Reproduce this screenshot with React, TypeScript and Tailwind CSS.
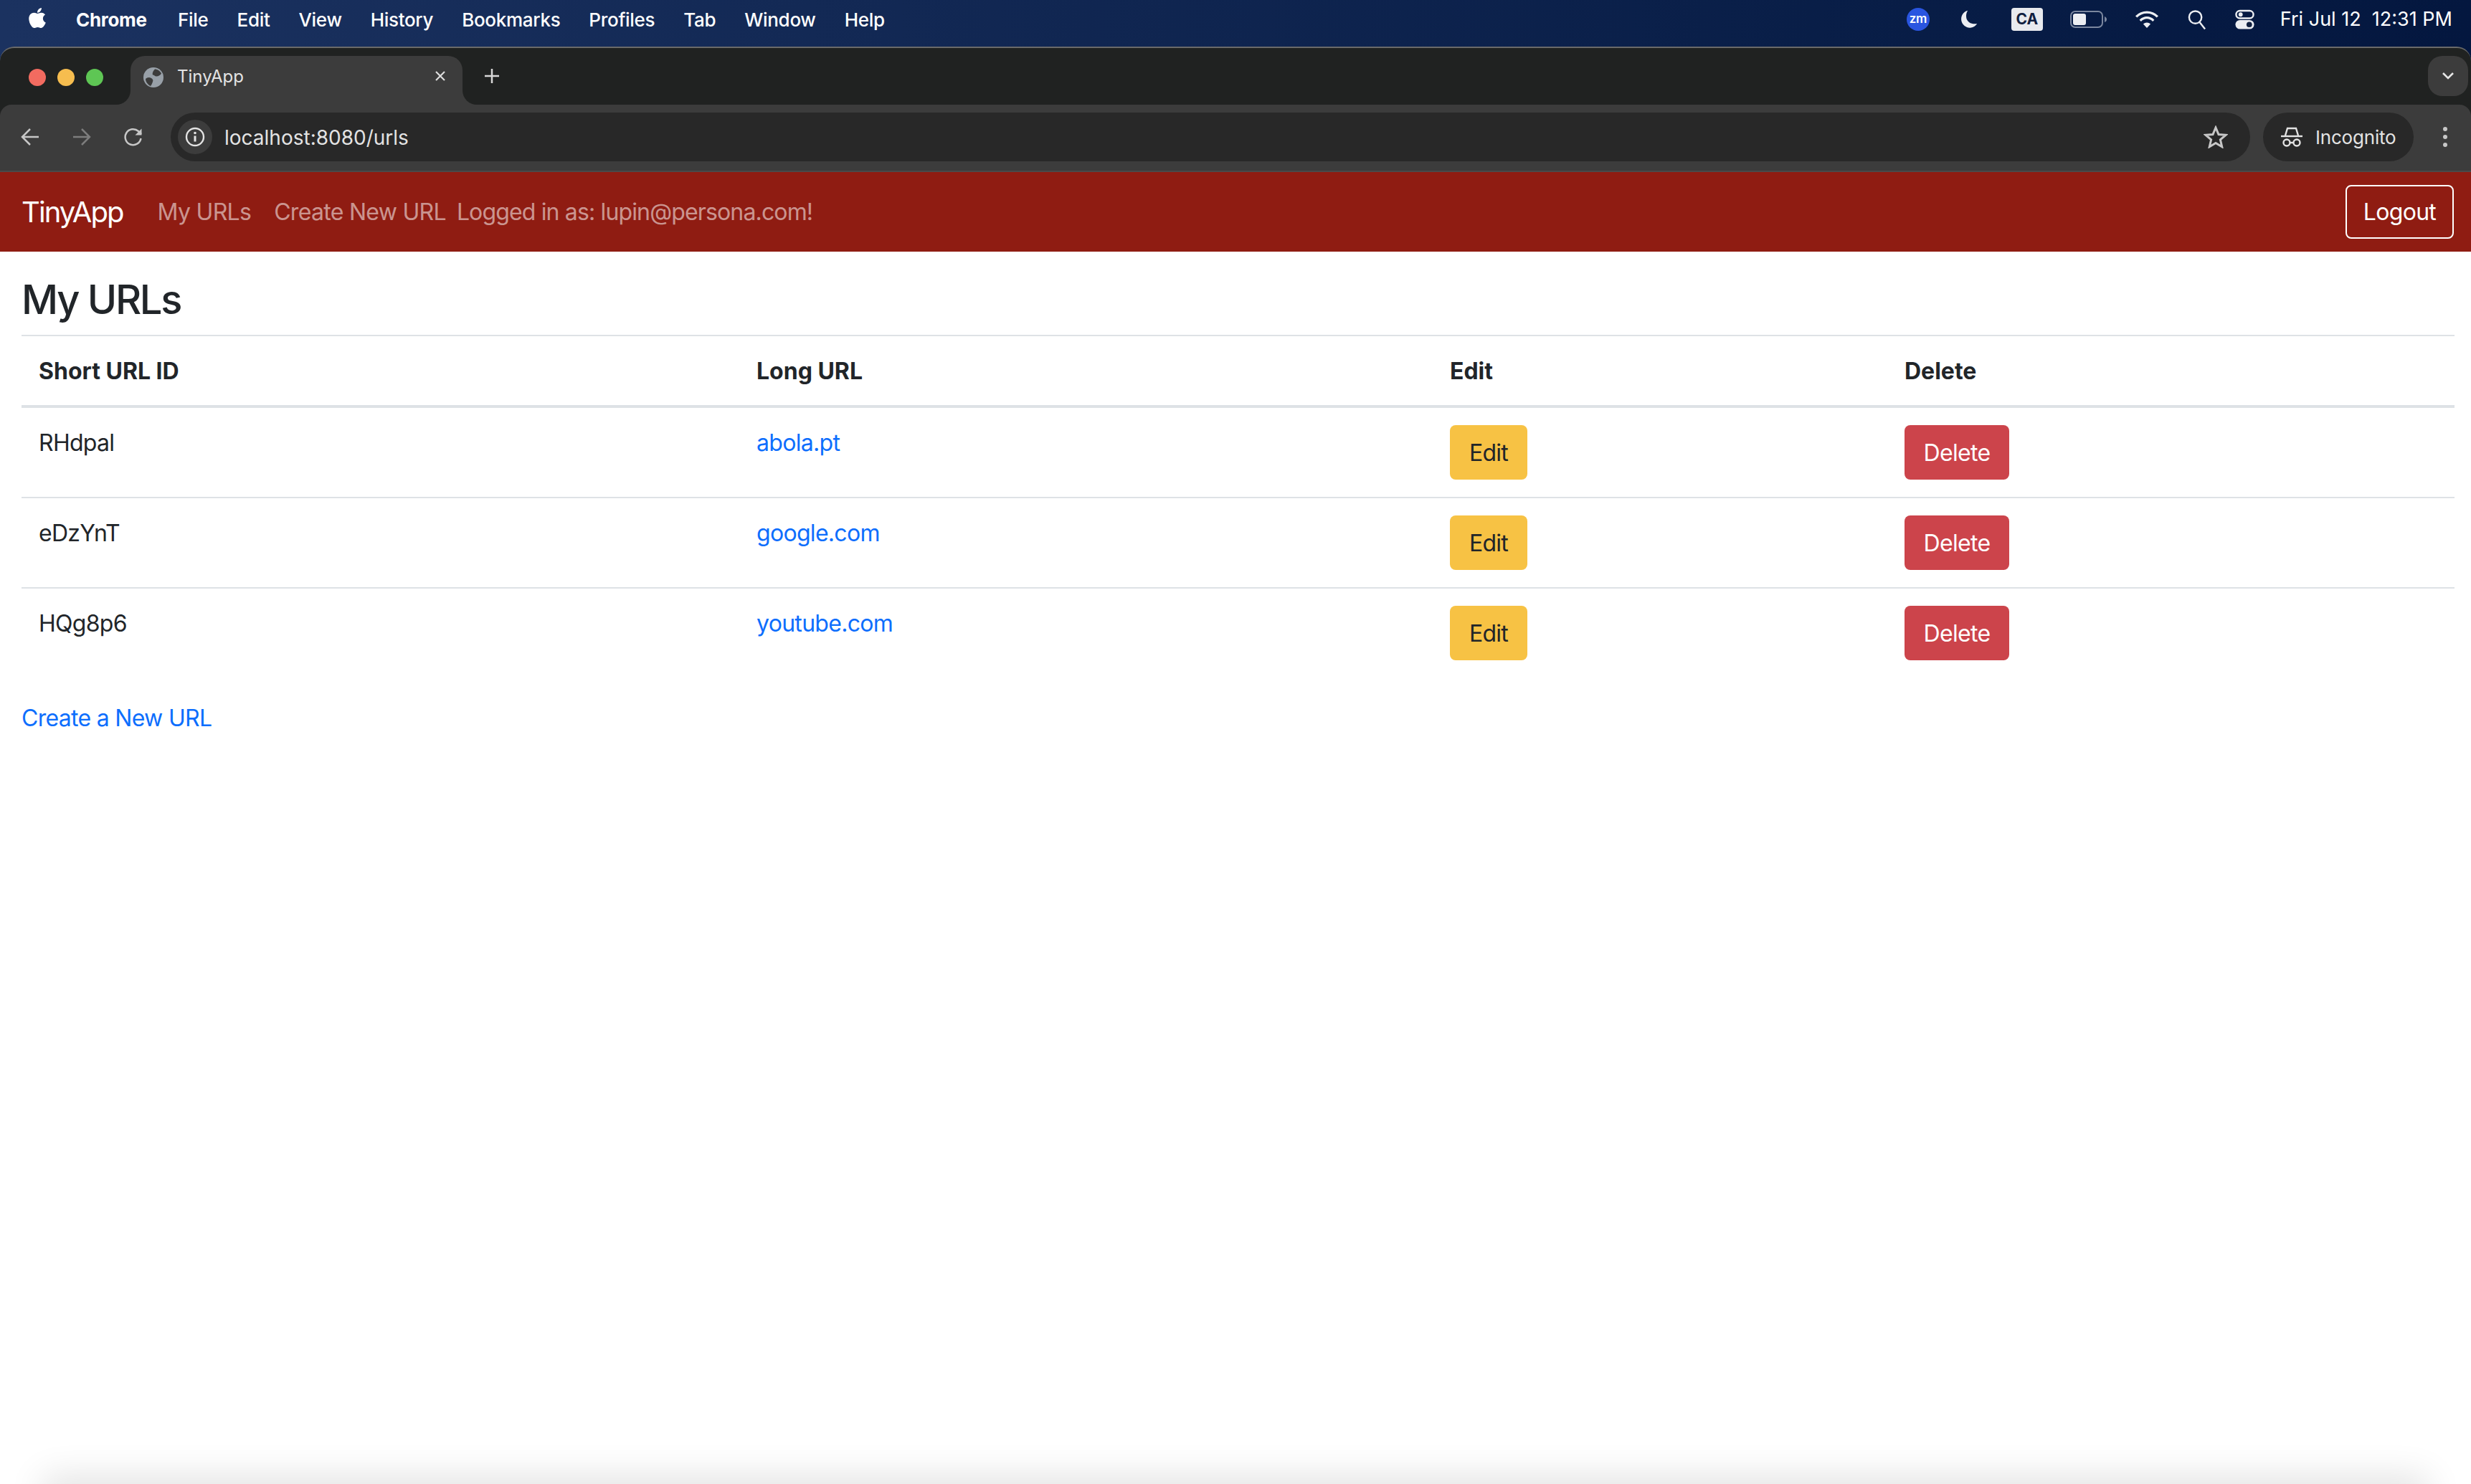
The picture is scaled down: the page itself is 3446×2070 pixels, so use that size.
import React from "react";
import { FaApple } from "react-icons/fa";

const rows = [
  { id: "RHdpal", url: "abola.pt" },
  { id: "eDzYnT", url: "google.com" },
  { id: "HQg8p6", url: "youtube.com" },
];
const menus = ["File", "Edit", "View", "History", "Bookmarks", "Profiles", "Tab", "Window", "Help"];

function MenuBar() {
  return (
    <div className="h-[65px] shrink-0 flex items-center justify-between pb-[11px] text-white text-[26px] tracking-[-0.3px] font-medium">
      <div className="flex items-center">
        <FaApple className="ml-[37px] mr-[39px] w-[30px] h-[32px] -mt-1" />
        <span className="font-bold mr-[41px] w-[101px] whitespace-nowrap">Chrome</span>
        <div className="flex gap-[40px]">
          {menus.map((m) => (
            <span key={m}>{m}</span>
          ))}
        </div>
      </div>
      <div className="flex items-center pr-[26px]">
        <div className="w-[32px] h-[32px] rounded-full bg-[#2a55e0] flex items-center justify-center text-[17px] font-semibold mr-[41px]">zm</div>
        <svg width="28" height="28" viewBox="0 0 30 30" className="mr-[45px]">
          <path d="M13 2C6 4 2.500 10 3.500 17 5 24 11 28 17 27.500 22 27 25 24.500 27 21.500 19 23 12.500 19 11 13 10.200 9 11 5 13 2Z" fill="#eceef2" />
        </svg>
        <div className="w-[44px] h-[32px] rounded-[4px] bg-[#e8eaee] text-[#10203f] font-bold text-[21px] tracking-normal flex items-center justify-center mr-[38px]">CA</div>
        <svg width="52" height="26" viewBox="0 0 52 26" className="mr-[38px]">
          <rect x="1" y="2" width="44" height="22" rx="6" fill="none" stroke="#7b879f" strokeWidth="2" />
          <rect x="4" y="5" width="18" height="16" rx="3" fill="#eceef2" />
          <path d="M48 9c2 1 3 2 3 4s-1 3-3 4z" fill="#7b879f" />
        </svg>
        <svg width="34" height="26" viewBox="0 0 36 28" className="mr-[39px]" fill="none" stroke="#eceef2" strokeWidth="3.500">
          <path d="M2 10C11 1 25 1 34 10" />
          <path d="M8 16C14 10 22 10 28 16" />
          <path d="M18 27l-5.500-6c3-3 8-3 11 0z" fill="#eceef2" stroke="none" />
        </svg>
        <svg width="27" height="30" viewBox="0 0 28 30" className="mr-[40px]" fill="none" stroke="#eceef2" strokeWidth="2.500">
          <circle cx="12" cy="12" r="9" />
          <path d="M18 19l8 10" />
        </svg>
        <svg width="27" height="28" viewBox="0 0 28 28" className="mr-[36px]">
          <rect x="1.500" y="1.500" width="25" height="11" rx="5.500" fill="none" stroke="#eceef2" strokeWidth="2.500" />
          <circle cx="8" cy="7" r="3" fill="#eceef2" />
          <rect x="0.500" y="15" width="27" height="13" rx="6.500" fill="#eceef2" />
          <circle cx="20.500" cy="21.500" r="4" fill="#10203f" />
        </svg>
        <span className="text-[27px] tracking-normal font-normal whitespace-pre">Fri Jul 12  12:31 PM</span>
      </div>
    </div>
  );
}

function TabStrip() {
  return (
    <div className="h-[81px] shrink-0 bg-[#202221] border-t-2 border-[#6a6a6a] rounded-t-[20px] flex items-start relative">
      <div className="flex gap-[16px] ml-[40px] mt-[29px]">
        <div className="w-[24px] h-[24px] rounded-full bg-[#f26b60]" />
        <div className="w-[24px] h-[24px] rounded-full bg-[#f6bd4f]" />
        <div className="w-[24px] h-[24px] rounded-full bg-[#5ec654]" />
      </div>
      <div className="ml-[38px] mt-[11px] w-[463px] h-[68px] bg-[#3c3c3c] rounded-t-[20px] flex items-center relative">
        <div className="absolute -left-[20px] bottom-0 w-[20px] h-[20px] bg-[#3c3c3c]">
          <div className="w-full h-full bg-[#202221] rounded-br-[20px]" />
        </div>
        <div className="absolute -right-[20px] bottom-0 w-[20px] h-[20px] bg-[#3c3c3c]">
          <div className="w-full h-full bg-[#202221] rounded-bl-[20px]" />
        </div>
        <svg width="28" height="28" viewBox="0 0 28 28" className="ml-[18px] mr-[19px] -mt-[8px]">
          <circle cx="14" cy="14" r="14" fill="#98a0a8" />
          <path d="M16 2.500c3 0 7 2 9 6-1 2-4 4-7 4-2 0-3-2-5-2-1-3 1-6 3-8z" fill="#3c3c3c" />
          <path d="M3 16c2-2 5-3 8-1 2 1 3 3 2 5-1 3-2 5-3 6-4-2-7-6-7-10z" fill="#3c3c3c" />
        </svg>
        <span className="text-[24px] text-[#e3e3e3] -mt-[10px]">TinyApp</span>
        <svg width="16" height="16" viewBox="0 0 16 16" className="absolute left-[424px] top-[20px]" stroke="#dddddd" strokeWidth="2.200">
          <path d="M2 2l12 12M14 2L2 14" />
        </svg>
      </div>
      <svg width="22" height="22" viewBox="0 0 22 22" className="ml-[30px] mt-[28px]" stroke="#d8d8d8" strokeWidth="2.500">
        <path d="M11 1v20M1 11h20" />
      </svg>
      <div className="absolute right-[4px] top-[11px] w-[56px] h-[56px] rounded-[20px] bg-[#3c3c3c] flex items-center justify-center">
        <svg width="18" height="12" viewBox="0 0 18 12" fill="none" stroke="#e6e6e6" strokeWidth="2.600">
          <path d="M2 2l7 7 7-7" />
        </svg>
      </div>
    </div>
  );
}

function Toolbar() {
  return (
    <div className="h-[94px] shrink-0 bg-[#3c3c3c] flex items-center pb-[2px] border-b-2 border-[#4a4a4a] rounded-t-[16px]">
      <svg width="26" height="26" viewBox="0 0 26 26" className="ml-[29px]" fill="none" stroke="#c7c7c7" strokeWidth="2.500">
        <path d="M25 13H2M13 2L2 13l11 11" />
      </svg>
      <svg width="26" height="26" viewBox="0 0 26 26" className="ml-[46px]" fill="none" stroke="#7d7d7d" strokeWidth="2.500">
        <path d="M1 13h23M13 2l11 11-11 11" />
      </svg>
      <svg width="26" height="26" viewBox="0 0 26 26" className="ml-[46px]" fill="none" stroke="#c7c7c7" strokeWidth="2.500">
        <path d="M23.500 15A11 11 0 1 1 20 5L24 9" />
        <path d="M24.500 1.500v9h-9z" fill="#c7c7c7" stroke="none" />
      </svg>
      <div className="ml-[39px] w-[2900px] h-[68px] rounded-full bg-[#282828] flex items-center pl-[10px] pr-[31px]">
        <div className="w-[48px] h-[48px] rounded-full bg-[#3c3c3c] flex items-center justify-center shrink-0">
          <svg width="28" height="28" viewBox="0 0 28 28" fill="none" stroke="#e3e3e3" strokeWidth="2.400">
            <circle cx="14" cy="14" r="12" />
            <path d="M14 12.500v8" strokeWidth="3" />
            <circle cx="14" cy="8.500" r="1.800" fill="#e3e3e3" stroke="none" />
          </svg>
        </div>
        <span className="ml-[17px] text-[28px] mt-[1px] text-[#e3e3e3] flex-1">localhost:8080/urls</span>
        <svg width="34" height="32" viewBox="0 0 34 32" fill="none" stroke="#c7c7c7" strokeWidth="3">
          <path d="M17 3l4 9.500 10 .8-7.600 6.600 2.300 9.800L17 24.500 8.300 29.700l2.300-9.800L3 13.300l10-.8z" />
        </svg>
      </div>
      <div className="ml-[18px] w-[210px] h-[68px] rounded-full bg-[#282828] flex items-center pl-[25px]">
        <svg width="30" height="30" viewBox="0 0 30 30" fill="none" stroke="#e3e3e3" strokeWidth="2.400">
          <path d="M0 14h30" />
          <path d="M6 13l3-10h12l3 10" />
          <circle cx="8" cy="23" r="4.500" />
          <circle cx="22" cy="23" r="4.500" />
          <path d="M12.500 23h5" />
        </svg>
        <span className="ml-[18px] text-[26px] tracking-[-0.2px] text-[#e3e3e3]">Incognito</span>
      </div>
      <div className="ml-[41px] flex flex-col gap-[5px]">
        <div className="w-[6px] h-[6px] rounded-full bg-[#c7c7c7]" />
        <div className="w-[6px] h-[6px] rounded-full bg-[#c7c7c7]" />
        <div className="w-[6px] h-[6px] rounded-full bg-[#c7c7c7]" />
      </div>
    </div>
  );
}

function NavBar() {
  return (
    <nav className="h-[111px] shrink-0 bg-[#8f1c12] flex items-center pl-[30px] pr-[24px] text-[32px] tracking-[-0.7px] text-[#ffffff8c]">
      <span className="text-[40px] text-white tracking-[-1.900px] mr-[48px]">TinyApp</span>
      <span className="mr-[32px] pt-[1px]">My URLs</span>
      <span className="mr-[15px] pt-[1px]">Create New URL</span>
      <span className="flex-1 pt-[1px] tracking-[-0.85px]">Logged in as: lupin@persona.com!</span>
      <button className="w-[151px] h-[75px] rounded-[8px] border-2 border-white text-white pt-[1px]">Logout</button>
    </nav>
  );
}

function UrlTable() {
  return (
    <table className="w-[3393px] table-fixed border-collapse text-[#212529]">
      <colgroup>
        <col className="w-[1001px]" />
        <col className="w-[967px]" />
        <col className="w-[634px]" />
        <col />
      </colgroup>
      <thead>
        <tr className="h-[98px] border-b-4 border-[#dee2e6] text-left tracking-normal">
          <th className="px-[24px] pt-[2px] font-bold">Short URL ID</th>
          <th className="px-[24px] pt-[2px] font-bold">Long URL</th>
          <th className="px-[24px] pt-[2px] font-bold">Edit</th>
          <th className="px-[24px] pt-[2px] font-bold">Delete</th>
        </tr>
      </thead>
      <tbody>
        {rows.map((r, i) => (
          <tr key={r.id} className={i < 2 ? "border-b-2 border-[#dee2e6]" : ""}>
            <td className="px-[24px] pt-[25px] pb-[23px] align-top">{r.id}</td>
            <td className="px-[24px] pt-[25px] pb-[23px] align-top">
              <a className="text-[#0d6efd]">{r.url}</a>
            </td>
            <td className="px-[24px] pt-[24px] pb-[24px] align-top">
              <button className="block w-[108px] h-[76px] rounded-[8px] bg-[#f7c244] pt-[1px]">Edit</button>
            </td>
            <td className="px-[24px] pt-[24px] pb-[24px] align-top">
              <button className="block w-[146px] h-[76px] rounded-[8px] bg-[#cc444b] text-white pt-[1px]">Delete</button>
            </td>
          </tr>
        ))}
      </tbody>
    </table>
  );
}

export default function App() {
  return (
    <div className="w-[3446px] h-[2070px] overflow-hidden relative flex flex-col bg-white font-['Inter',sans-serif]">
      <div className="bg-gradient-to-r from-[#1b3260] to-[#04173f] shrink-0">
        <MenuBar />
        <TabStrip />
      </div>
      <div className="bg-[#202221] shrink-0">
        <Toolbar />
      </div>
      <NavBar />
      <main className="pl-[30px] pr-[23px] text-[32px] tracking-[-0.7px] text-[#212529]">
        <h1 className="h-[118px] pt-[33px] text-[56px] leading-[68px] font-medium tracking-[-2.300px] border-b-2 border-[#dee2e6]">My URLs</h1>
        <UrlTable />
        <a className="block mt-[33px] text-[#0d6efd]">Create a New URL</a>
      </main>
      <div className="absolute left-[70px] right-[70px] -bottom-[30px] h-[30px] shadow-[0_0_50px_10px_rgba(0,0,0,0.12)]" />
    </div>
  );
}
